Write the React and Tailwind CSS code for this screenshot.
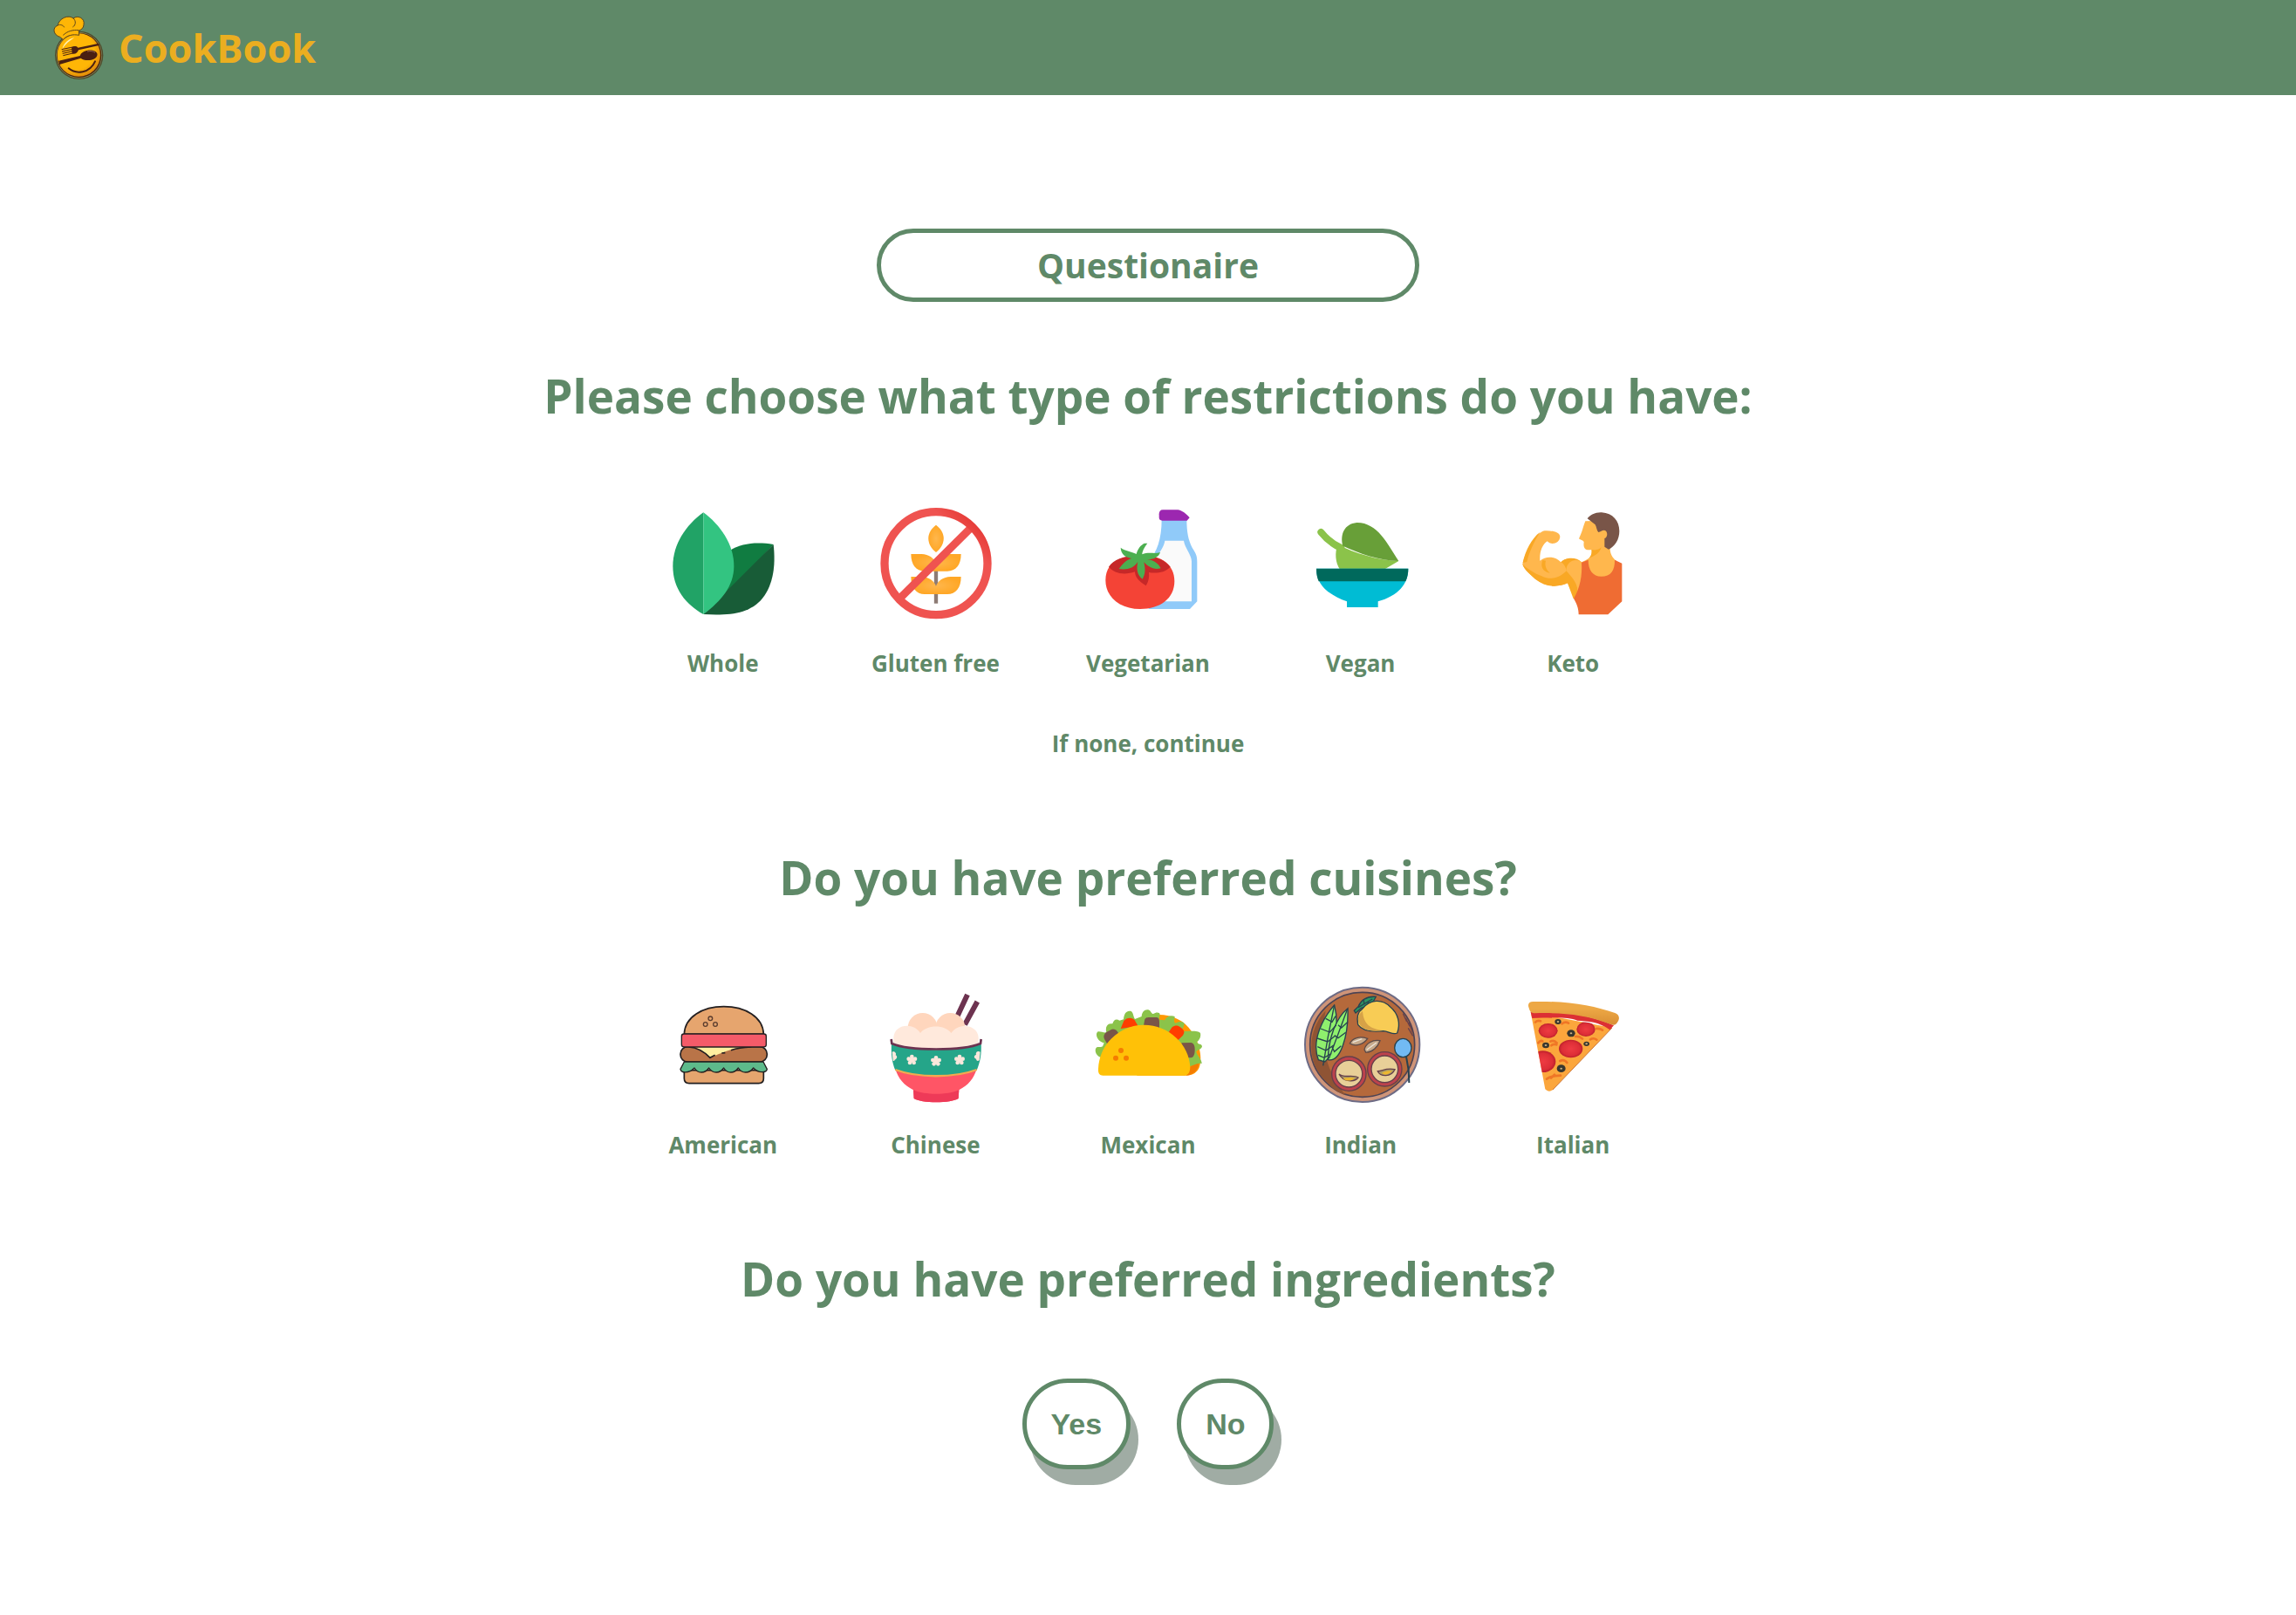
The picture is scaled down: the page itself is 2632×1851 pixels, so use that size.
import React from "react";

function ChefLogo() {
  return (
    <svg viewBox="180 48 180 228" className="h-[76px] w-[60px]" aria-hidden="true">
      <defs>
        <radialGradient id="face" cx="0.42" cy="0.4" r="0.62">
          <stop offset="0.7" stopColor="#ffb606" />
          <stop offset="1" stopColor="#e08a0a" />
        </radialGradient>
      </defs>
      <circle cx="272" cy="187" r="83" fill="#4d4a2c" />
      <circle cx="272" cy="187" r="79" fill="#8b8f5c" />
      <circle cx="272" cy="187" r="77" fill="#4a2410" />
      <circle cx="271" cy="186" r="74" fill="url(#face)" />
      <path d="M206 124C184 118 178 92 199 84C202 60 236 46 252 60C268 48 293 60 288 82C287 94 280 99 271 102L272 118C250 114 232 118 217 133Z" fill="#ffb606" stroke="#5b451c" strokeWidth="3" />
      <path d="M199 84C208 80 218 84 221 91M252 60C262 68 261 84 250 90M217 118C232 104 250 99 271 101" fill="none" stroke="#5b451c" strokeWidth="3" />
      <path d="M214 165C220 144 236 131 256 126C240 136 226 148 214 165Z" fill="#fff2b8" />
      <path d="M250 159L212 167M250 166L213 174M250 173L215 181M250 180L217 188" fill="none" stroke="#4a2012" strokeWidth="3" />
      <path d="M340 146L268 161C262 154 252 156 246 160L248 182C260 184 267 178 270 169L341 153Z" fill="#4a2012" />
      <path d="M202 206L275 189C279 172 310 164 327 173C342 182 334 198 314 203C298 206 285 203 278 197L204 219Z" fill="#4a2012" />
      <path d="M300 174C312 171 322 173 327 178" fill="none" stroke="#c08a70" strokeWidth="2" />
      <path d="M236 232C262 254 309 249 327 208" fill="none" stroke="#4a2012" strokeWidth="6" strokeLinecap="round" />
    </svg>
  );
}

const Whole = () => (
  <svg viewBox="52 42 432 432" className="size-36" aria-hidden="true">
    <path d="M290 214C330 187 384 183 441 192L300 345L240 380Z" fill="#107c41" />
    <path d="M441 192C449 262 441 330 403 377C360 430 290 437 200 432Z" fill="#185c37" />
    <path d="M200 82C140 125 95 192 95 266C95 345 140 398 200 432Z" fill="#21a366" />
    <path d="M200 82C258 125 305 192 305 266C305 335 262 385 200 432Z" fill="#33c481" />
  </svg>
);

const GlutenFree = () => (
  <svg viewBox="783 42 432 432" className="size-36" aria-hidden="true">
    <defs>
      <radialGradient id="grain">
        <stop offset="0" stopColor="#ffb74d" />
        <stop offset="1" stopColor="#ffa726" />
      </radialGradient>
      <linearGradient id="ban" x1="0" y1="1" x2="1" y2="0">
        <stop offset="0.75" stopColor="#ef5350" />
        <stop offset="0.9" stopColor="#e53935" />
        <stop offset="1" stopColor="#ef5350" />
      </linearGradient>
    </defs>
    <path d="M1002 282V395" stroke="#8d7b74" strokeWidth="13" />
    <path d="M1002 125C967 151 967 191 1002 219C1037 191 1037 151 1002 125Z" fill="url(#grain)" />
    <path d="M916 225H952C977 225 997 240 1002 258C1007 240 1027 225 1052 225H1088C1088 262 1070 284 1041 284H963C934 284 916 262 916 225Z" fill="url(#grain)" />
    <path d="M916 303H952C977 303 997 318 1002 336C1007 318 1027 303 1052 303H1088C1088 341 1070 363 1041 363H963C934 363 916 341 916 303Z" fill="url(#grain)" />
    <path d="M875 380L1126 131" stroke="#ef5350" strokeWidth="27" />
    <circle cx="1002" cy="257" r="177" fill="none" stroke="url(#ban)" strokeWidth="28" />
  </svg>
);

const Vegetarian = () => (
  <svg viewBox="72 42 432 432" className="size-36" aria-hidden="true">
    <path d="M335 106H421C421 151 427 178 440 203C452 222 457 230 457 252V388L432 414H290V250C318 220 335 175 335 106Z" fill="#90caf9" />
    <path d="M346 179H411C414 203 438 228 438 250V388H330L310 240C330 220 343 198 346 179Z" fill="#fafafa" />
    <path d="M339 73H390C404 73 421 89 431 100L422 110H337C330 110 326 106 326 100V88C326 79 330 73 339 73Z" fill="#9c27b0" />
    <path d="M261 231C327 226 379 258 379 318C379 378 330 414 261 414C190 414 142 372 142 315C142 255 190 230 261 231Z" fill="#f44336" />
    <path d="M153 269C170 242 210 229 261 231C310 229 345 244 365 269C345 290 315 292 291 288C293 305 290 320 281 334C256 318 244 306 243 286C205 299 171 291 153 269Z" fill="#c62828" />
    <path d="M194 203C211 216 230 215 248 225C253 206 263 194 276 188H286C275 202 268 216 268 226C290 216 311 226 330 219C325 236 304 245 285 243C309 246 324 258 332 274C307 281 288 268 274 253C279 275 280 293 269 311C249 297 248 272 253 252C239 274 216 280 188 276C200 260 213 245 232 240C211 237 195 226 194 203Z" fill="#4caf50" />
  </svg>
);

const Vegan = () => (
  <svg viewBox="802 42 432 432" className="size-36" aria-hidden="true">
    <path d="M881 150C900 174 923 192 950 204" fill="none" stroke="#8bc34a" strokeWidth="24" strokeLinecap="round" />
    <path d="M938 192C1000 223 1070 245 1148 249L1098 278H946C930 254 928 221 938 192Z" fill="#8bc34a" />
    <path d="M956 197C946 158 961 121 1004 117C1075 116 1110 190 1148 249C1078 246 1015 224 956 197Z" fill="#689f38" />
    <path d="M865 275H1181C1181 330 1145 368 1077 388V408H970V388C906 365 865 330 865 275Z" fill="#00bcd4" />
    <path d="M865 275H1181C1181 291 1178 306 1172 319H873C867 306 865 291 865 275Z" fill="#00695c" />
  </svg>
);

const Keto = () => (
  <svg viewBox="93 42 432 432" className="size-36" aria-hidden="true">
    <path d="M352 112C343 135 341 150 330 172C334 178 344 175 347 184C344 206 352 214 374 210C379 234 360 243 339 253C310 235 280 238 268 253C246 231 216 232 196 248C194 217 204 193 221 181C233 195 264 190 265 165C263 148 236 144 212 145C180 151 145 218 136 260C143 280 163 295 180 311C217 340 256 340 291 325L318 384L440 320L460 250C444 237 438 225 437 207L425 110Z" fill="#ffb74d" />
    <path d="M136 260C153 276 177 291 202 301C237 318 267 304 287 283C285 269 278 258 268 253C280 237 320 232 339 253C323 253 314 264 311 278C320 305 334 332 320 372L311 379L291 325C256 340 217 340 180 311C163 295 143 280 136 260ZM205 246C196 270 207 285 230 290C214 277 212 259 216 248ZM137 255C145 215 168 170 196 150C177 180 158 220 151 252Z" fill="#f9a825" />
    <path d="M286 282C306 306 322 320 326 350C337 315 341 280 337 252C318 238 287 250 286 282Z" fill="#ffb74d" />
    <path d="M373 210C388 213 400 210 407 202C403 219 386 232 366 238C374 229 374 219 373 210Z" fill="#f9a825" />
    <path d="M339 254L362 245C362 280 378 302 407 302C440 302 454 281 453 245L478 257V388L430 433H329C329 410 321 394 312 378C333 342 342 300 339 254Z" fill="#ef6c33" />
    <path d="M359 103C369 90 386 81 408 82C447 84 469 112 469 146C469 175 454 198 432 209L418 200V171C430 168 430 145 417 143C409 143 404 149 397 150C391 144 391 133 386 124Z" fill="#795548" />
  </svg>
);

const Burger = () => (
  <svg viewBox="52 48 432 432" className="size-36" aria-hidden="true">
    <g stroke="#231f20" strokeWidth="5" strokeLinejoin="round">
      <path d="M134 350H407V378Q407 395 390 395H151Q134 395 134 378Z" fill="#e6a56e" />
      <path d="M134 226C136 166 198 131 270 131C343 131 405 166 407 226Z" fill="#e6a56e" />
      <rect x="121" y="269" width="298" height="52" rx="25" fill="#b97448" />
      <path d="M168 270H338C296 276 262 290 223 307C203 286 190 278 168 270Z" fill="#fff0a0" stroke="none" />
      <path d="M150 270C180 272 200 283 223 307L240 298M263 291L275 290M295 281C315 274 340 271 365 270" fill="none" />
      <rect x="125" y="225" width="291" height="45" rx="8" fill="#f45b69" strokeWidth="4" />
      <path d="M134 321H406L419 346C417 358 390 362 372 342C358 362 332 362 320 342C306 362 282 362 270 342C256 362 232 362 219 342C205 362 181 362 169 342C150 362 123 360 121 346Z" fill="#5dba8b" strokeWidth="4" />
      <g fill="#e6a56e" strokeWidth="4" stroke="#5b3d2e">
        <circle cx="224" cy="172" r="7" />
        <circle cx="207" cy="192" r="7" />
        <circle cx="241" cy="192" r="7" />
      </g>
    </g>
  </svg>
);

const flowers = [
  [919, 314],
  [1002, 318],
  [1083, 314],
];

const RiceBowl = () => (
  <svg viewBox="783 48 432 432" className="size-36" aria-hidden="true">
    <path d="M1110 90L1076 163M1144 114L1101 193" stroke="#6d3350" strokeWidth="18" />
    <circle cx="956" cy="204" r="51" fill="#ffd6bd" />
    <circle cx="1051" cy="204" r="51" fill="#ffd6bd" />
    <path d="M856 262V238C858 190 925 184 948 222C970 192 1033 192 1054 222C1080 184 1146 192 1148 238V262L1002 282Z" fill="#ffe9dc" />
    <path d="M862 345H1142C1132 379 1113 401 1081 418L1079 447C1055 464 950 464 926 447L924 418C892 401 872 379 862 345Z" fill="#ff5566" />
    <path d="M924 418C965 436 1040 436 1081 418L1079 447C1055 464 950 464 926 447Z" fill="#ee3a58" />
    <path d="M849 255C920 288 1084 288 1157 255C1159 294 1154 322 1142 350C1066 378 938 378 862 350C850 322 847 294 849 255Z" fill="#25a589" />
    <path d="M862 348C938 377 1066 377 1142 348" fill="none" stroke="#f5a94e" strokeWidth="7" />
    <path d="M848 243L850 258C910 284 1094 284 1155 258L1157 243" fill="none" stroke="#6d3350" strokeWidth="8" />
    {flowers.map(([x, y]) => (
      <g key={x} fill="#fbe7dc">
        <circle cx={x} cy={y - 11} r="7" />
        <circle cx={x - 11} cy={y - 3} r="7" />
        <circle cx={x + 11} cy={y - 3} r="7" />
        <circle cx={x - 7} cy={y + 10} r="7" />
        <circle cx={x + 7} cy={y + 10} r="7" />
        <circle cx={x} cy={y} r="9" />
      </g>
    ))}
    <path d="M851 287C860 282 867 292 863 298C871 301 868 312 860 314C859 318 856 319 854 317ZM1154 287C1147 282 1137 287 1140 297C1131 299 1132 309 1140 311C1141 319 1148 319 1151 315Z" fill="#fbe7dc" />
  </svg>
);

const Taco = () => (
  <svg viewBox="72 48 432 432" className="size-36" aria-hidden="true">
    <path d="M240 180C320 140 400 160 437 215C470 260 476 320 462 345C452 362 436 368 418 368H250Z" fill="#ff9800" />
    <path d="M430 340L462 318C466 345 446 366 420 368Z" fill="#f57c00" />
    <path d="M125 305C108 300 102 278 112 271C120 268 127 272 132 268L137 256C112 250 105 225 116 217C125 215 134 222 145 220C140 200 148 187 166 190C170 177 178 172 190 179L204 175C205 155 215 143 230 147C238 152 237 165 243 174L266 165C267 148 278 139 292 143C299 147 300 156 306 156C316 149 329 150 329 158L326 176L345 178C352 164 367 159 380 165C380 174 374 184 383 188C392 182 410 181 413 190C412 202 404 206 408 216C427 216 462 212 468 222C471 235 465 246 456 253C460 263 473 258 474 268C473 278 459 279 454 286C455 298 474 314 473 327C456 323 446 333 431 337L350 300H160Z" fill="#8bc34a" />
    <rect x="137" y="214" width="52" height="50" rx="18" fill="#795548" transform="rotate(-30 160 235)" />
    <path d="M194 207L205 180C214 168 234 166 242 178L254 198Z" fill="#ff3d00" />
    <path d="M272 202L276 179C277 170 284 168 292 168H318C326 170 327 177 327 184V206Z" fill="#795548" />
    <path d="M357 222L371 202C381 194 392 196 399 202C414 212 415 220 408 230L388 250Z" fill="#ff3d00" />
    <path d="M403 256L437 255C446 258 449 266 449 278C449 294 446 305 435 307H410Z" fill="#795548" />
    <path d="M117 345C121 255 195 194 274 194C361 194 430 263 433 338C433 357 425 368 411 368H133C121 368 116 361 117 345Z" fill="#ffc107" />
    <g fill="#f57c00">
      <circle cx="195" cy="282" r="9" />
      <circle cx="177" cy="308" r="9" />
      <circle cx="213" cy="308" r="9" />
    </g>
  </svg>
);

const Thali = () => (
  <svg viewBox="82 48 432 432" className="size-36" aria-hidden="true">
    <circle cx="303" cy="262" r="197" fill="#cf9478" stroke="#6d6b85" strokeWidth="6" />
    <circle cx="303" cy="262" r="180" fill="#b5693b" stroke="#4c4354" strokeWidth="5" />
    <path d="M177 145C112 215 110 325 180 390C203 415 220 427 245 435C195 375 150 280 177 145Z" fill="#8f5434" />
    <g stroke="#28424f" strokeWidth="4">
      <path d="M207 126C169 168 126 247 152 314L174 321C211 290 224 190 207 126Z" fill="#8ff06d" />
      <path d="M253 137C214 168 186 238 185 314C227 324 256 234 253 137Z" fill="#8ff06d" />
      <path d="M206 130L185 235L168 334M252 139L222 220L188 310M149 269L178 282L204 264M148 240L184 252L211 230M160 207L191 219L213 195M177 172L199 184L211 164M199 270L207 286L230 266M207 230L220 239L246 220M220 194L231 204L253 184M151 298L172 307L197 292" fill="none" />
      <path d="M275 145L289 131C302 102 325 95 350 97C341 119 326 132 300 136L280 153Z" fill="#299663" />
      <path d="M289 134L338 105M309 122L308 107M320 115L329 121" fill="none" />
      <path d="M303 139C329 105 372 104 399 132C427 155 435 190 423 222C408 229 394 216 375 215C335 219 302 214 288 193C283 166 287 149 303 139Z" fill="#f8cc55" />
      <path d="M291 185C301 211 330 219 375 213C332 208 307 193 304 146C291 157 287 169 291 185Z" fill="#d6a247" stroke="none" />
      <ellipse cx="443" cy="273" rx="29" ry="32" fill="#72baf4" />
      <path d="M454 303L462 349L464 393" fill="none" strokeWidth="6" />
    </g>
    <path d="M443 155L456 183M452 170L466 199M463 185L476 220M461 205L477 232" stroke="#68404a" strokeWidth="4" />
    <g stroke="#5b4a49" strokeWidth="4" fill="#c7aa8c">
      <path d="M260 258C269 238 294 232 321 241C307 261 281 270 260 258Z" />
      <path d="M310 279C314 258 338 244 364 248C356 270 337 290 315 288Z" />
      <path d="M270 254L302 242M318 280L352 255" stroke="#eee6db" />
    </g>
    <g stroke="#65404b" strokeWidth="4">
      <circle cx="257" cy="362" r="59" fill="#bd424c" />
      <circle cx="257" cy="362" r="46" fill="#e8cf98" />
      <circle cx="380" cy="346" r="59" fill="#bd424c" />
      <circle cx="380" cy="346" r="46" fill="#e8cf98" />
      <path d="M223 363C240 379 269 363 289 375C277 391 238 392 223 363ZM356 353C372 353 385 340 415 347C402 375 365 373 356 353Z" fill="#a89a65" />
      <path d="M237 378C253 374 266 375 278 377C265 388 247 389 237 378ZM370 359C383 352 396 351 406 352C395 366 379 368 370 359Z" fill="#edb72f" stroke="none" />
    </g>
  </svg>
);

const olives = [
  [258, 183, 11],
  [303, 223, 14],
  [216, 264, 12],
  [356, 259, 10],
  [269, 344, 15],
];

const Pizza = () => (
  <svg viewBox="93 48 432 432" className="size-36" aria-hidden="true">
    <defs>
      <clipPath id="slice">
        <path d="M164 150L440 200L240 415Q226 428 214 414Z" />
      </clipPath>
      <radialGradient id="pepperoni">
        <stop offset="0" stopColor="#ee3b42" />
        <stop offset="0.75" stopColor="#dd2e37" />
        <stop offset="1" stopColor="#bd1f2c" />
      </radialGradient>
      <linearGradient id="crust" x1="0" y1="0" x2="0" y2="1">
        <stop offset="0.3" stopColor="#eda845" />
        <stop offset="1" stopColor="#d98f34" />
      </linearGradient>
    </defs>
    <path d="M164 150L444 204L240 417Q226 428 214 415Z" fill="#fba63c" />
    <path d="M444 204L240 417" stroke="#cf793c" strokeWidth="3" />
    <path d="M164 149C280 144 380 163 450 196L436 211C400 183 360 181 325 179C290 164 230 169 169 171Z" fill="#dc3034" />
    <g clipPath="url(#slice)" fill="url(#pepperoni)">
      <ellipse cx="224" cy="214" rx="33" ry="25" />
      <ellipse cx="354" cy="209" rx="32" ry="25" />
      <ellipse cx="302" cy="276" rx="41" ry="31" />
      <ellipse cx="206" cy="320" rx="44" ry="37" />
    </g>
    <path d="M272 190Q283 181 294 188M180 185Q188 177 198 181M389 207Q402 205 411 212M369 244Q381 237 391 245M232 251Q244 245 254 256M235 265Q243 258 253 262M265 318Q279 310 289 324M318 234Q332 232 342 242M219 380Q233 369 267 368M234 377L246 365M190 256Q198 246 205 250" fill="none" stroke="#ef7626" strokeWidth="8" strokeLinecap="round" />
    <path d="M172 114C290 111 380 128 454 153C468 158 472 171 463 184C458 194 451 197 440 192C350 157 270 151 176 154C163 154 160 143 157 133C153 121 160 114 172 114Z" fill="url(#crust)" />
    {olives.map(([x, y, r]) => (
      <g key={x}>
        <ellipse cx={x} cy={y} rx={r} ry={r - 2} fill="#38372f" />
        <ellipse cx={x} cy={y} rx="4" ry="3" fill="#c9b183" />
      </g>
    ))}
  </svg>
);

const diets = [
  ["Whole", Whole],
  ["Gluten free", GlutenFree],
  ["Vegetarian", Vegetarian],
  ["Vegan", Vegan],
  ["Keto", Keto],
];

const cuisines = [
  ["American", Burger],
  ["Chinese", RiceBowl],
  ["Mexican", Taco],
  ["Indian", Thali],
  ["Italian", Pizza],
];

function Choices({ items }) {
  return (
    <div className="mt-[82px] grid w-full max-w-[1218px] grid-cols-5">
      {items.map(([label, Icon]) => (
        <button key={label} type="button" className="flex cursor-pointer flex-col items-center gap-6 text-[26px] leading-9 font-bold">
          <Icon />
          {label}
        </button>
      ))}
    </div>
  );
}

function Question({ children }) {
  return <h2 className="text-center text-[53px] leading-[76px] font-bold">{children}</h2>;
}

function Answer({ children }) {
  return (
    <button
      type="button"
      className="h-[104px] cursor-pointer rounded-[52px] border-5 border-[#5f8968] bg-white px-7 font-['Liberation_Sans',Arial,sans-serif] text-[34px] font-bold shadow-[9px_18px_0_#a0aca4]"
    >
      {children}
    </button>
  );
}

export default function App() {
  return (
    <div className="min-h-screen bg-white font-['Open_Sans','Noto_Sans',sans-serif] text-[#5f8968]">
      <header className="flex h-[109px] items-center gap-4 bg-[#5f8968] px-[60px]">
        <ChefLogo />
        <span className="text-[45px] leading-[60px] font-bold text-[#ebae20]">CookBook</span>
      </header>
      <main className="flex flex-col items-center px-8 pt-[153px] pb-36">
        <h1 className="flex h-[84px] w-full max-w-[622px] items-center justify-center rounded-full border-5 border-[#5f8968] text-[39px] font-bold">
          Questionaire
        </h1>
        <div className="mt-[70px] flex w-full flex-col items-center">
          <Question>Please choose what type of restrictions do you have:</Question>
          <Choices items={diets} />
          <p className="mt-14 text-[26px] leading-9 font-bold">If none, continue</p>
        </div>
        <div className="mt-[98px] flex w-full flex-col items-center">
          <Question>Do you have preferred cuisines?</Question>
          <Choices items={cuisines} />
        </div>
        <div className="mt-[98px] flex w-full flex-col items-center">
          <Question>Do you have preferred ingredients?</Question>
          <div className="mt-[76px] flex gap-[53px]">
            <Answer>Yes</Answer>
            <Answer>No</Answer>
          </div>
        </div>
      </main>
    </div>
  );
}
